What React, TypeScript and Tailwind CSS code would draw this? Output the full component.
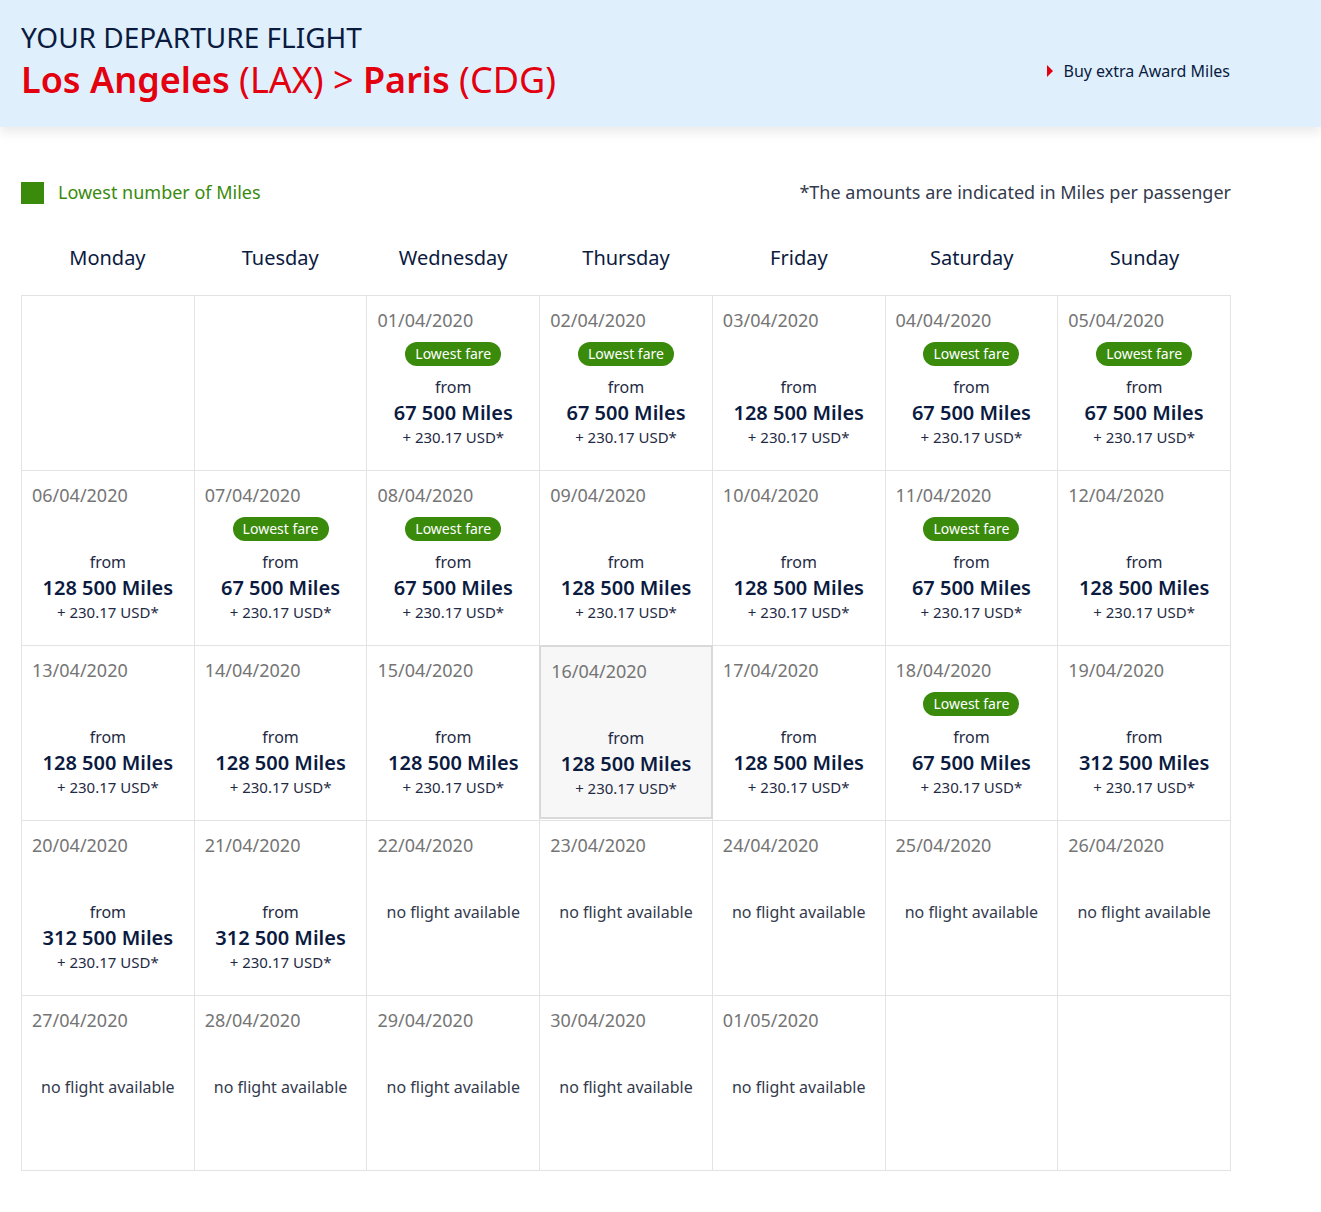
const days = ["Monday", "Tuesday", "Wednesday", "Thursday", "Friday", "Saturday", "Sunday"];

type Cell = { date?: string; miles?: string; low?: boolean; none?: boolean; hover?: boolean };

const m = (date: string, miles: string, low = false, hover = false): Cell => ({ date, miles, low, hover });
const n = (date: string): Cell => ({ date, none: true });

const cells: Cell[] = [
  {}, {},
  m("01/04/2020", "67 500", true), m("02/04/2020", "67 500", true), m("03/04/2020", "128 500"),
  m("04/04/2020", "67 500", true), m("05/04/2020", "67 500", true),
  m("06/04/2020", "128 500"), m("07/04/2020", "67 500", true), m("08/04/2020", "67 500", true),
  m("09/04/2020", "128 500"), m("10/04/2020", "128 500"), m("11/04/2020", "67 500", true), m("12/04/2020", "128 500"),
  m("13/04/2020", "128 500"), m("14/04/2020", "128 500"), m("15/04/2020", "128 500"),
  m("16/04/2020", "128 500", false, true), m("17/04/2020", "128 500"), m("18/04/2020", "67 500", true), m("19/04/2020", "312 500"),
  m("20/04/2020", "312 500"), m("21/04/2020", "312 500"), n("22/04/2020"), n("23/04/2020"), n("24/04/2020"), n("25/04/2020"), n("26/04/2020"),
  n("27/04/2020"), n("28/04/2020"), n("29/04/2020"), n("30/04/2020"), n("01/05/2020"), {}, {},
];

const DayCell = ({ c }: { c: Cell }) => (
  <div className="relative h-[175px] border-r border-b border-[#e3e3e3]">
    {c.date && (
      <div
        className={`flex h-full flex-col items-center px-[10px] pt-[12px] ${
          c.hover ? "absolute -left-px -top-px h-[177px] w-[calc(100%+2px)] border-2 border-[#d9d9d9] bg-[#f7f7f7] pt-[12px] z-10" : ""
        }`}
      >
        <div className="w-full text-[18px] leading-[24px] text-[#757575]">{c.date}</div>
        <div className="mt-[10px] flex h-[24px] items-center">
          {c.low && (
            <span className="rounded-full bg-[#3a8a0c] px-[10px] text-[14px] leading-[24px] text-white">Lowest fare</span>
          )}
        </div>
        {c.none ? (
          <div className="mt-[10px] text-[16px] leading-[22px] text-[#333a4d]">no flight available</div>
        ) : (
          <>
            <div className="mt-[10px] text-[16px] leading-[22px] text-[#1f2a44]">from</div>
            <div className="mt-[2px] text-[20px] font-semibold leading-[26px] text-[#0b1a3f]">{c.miles} Miles</div>
            <div className="text-[15px] leading-[22px] text-[#1f2a44]">+ 230.17 USD*</div>
          </>
        )}
      </div>
    )}
  </div>
);

export default function App() {
  return (
    <div className="min-h-[1212px] bg-white font-['Open_Sans',sans-serif]">
      <div className="relative flex h-[127px] items-start justify-between bg-[#dff0fc] pl-[21px] pr-[91px] shadow-[0_6px_10px_rgba(0,0,0,0.08)]">
        <div className="pt-[18px]">
          <div className="text-[28px] leading-[38px] text-[#0b1a3f]">YOUR DEPARTURE FLIGHT</div>
          <div className="text-[36px] leading-[48px] text-[#e3000f]">
            <span className="font-semibold">Los Angeles</span> (LAX) &gt; <span className="font-semibold">Paris</span> (CDG)
          </div>
        </div>
        <div className="mt-[59px] flex items-center gap-[10px] text-[16px] text-[#0b1a3f]">
          <svg width="8" height="12" viewBox="0 0 8 12"><path d="M1 0 L7 6 L1 12 Z" fill="#e3000f" /></svg>
          Buy extra Award Miles
        </div>
      </div>
      <div className="w-[1231px] pl-[21px]">
        <div className="mt-[52px] flex items-center justify-between">
          <div className="flex items-center gap-[14px]">
            <span className="h-[22px] w-[23px] bg-[#3a8a0c]" />
            <span className="text-[18px] text-[#3a8a0c]">Lowest number of Miles</span>
          </div>
          <span className="text-[18px] text-[#333a4d]">*The amounts are indicated in Miles per passenger</span>
        </div>
        <div className="mt-[38px] grid grid-cols-7">
          {days.map((d) => (
            <div key={d} className="pb-[24px] text-center text-[20px] leading-[27px] text-[#0b1a3f]">{d}</div>
          ))}
        </div>
        <div className="grid grid-cols-7 border-l border-t border-[#e3e3e3]">
          {cells.map((c, i) => (
            <DayCell key={i} c={c} />
          ))}
        </div>
      </div>
    </div>
  );
}
